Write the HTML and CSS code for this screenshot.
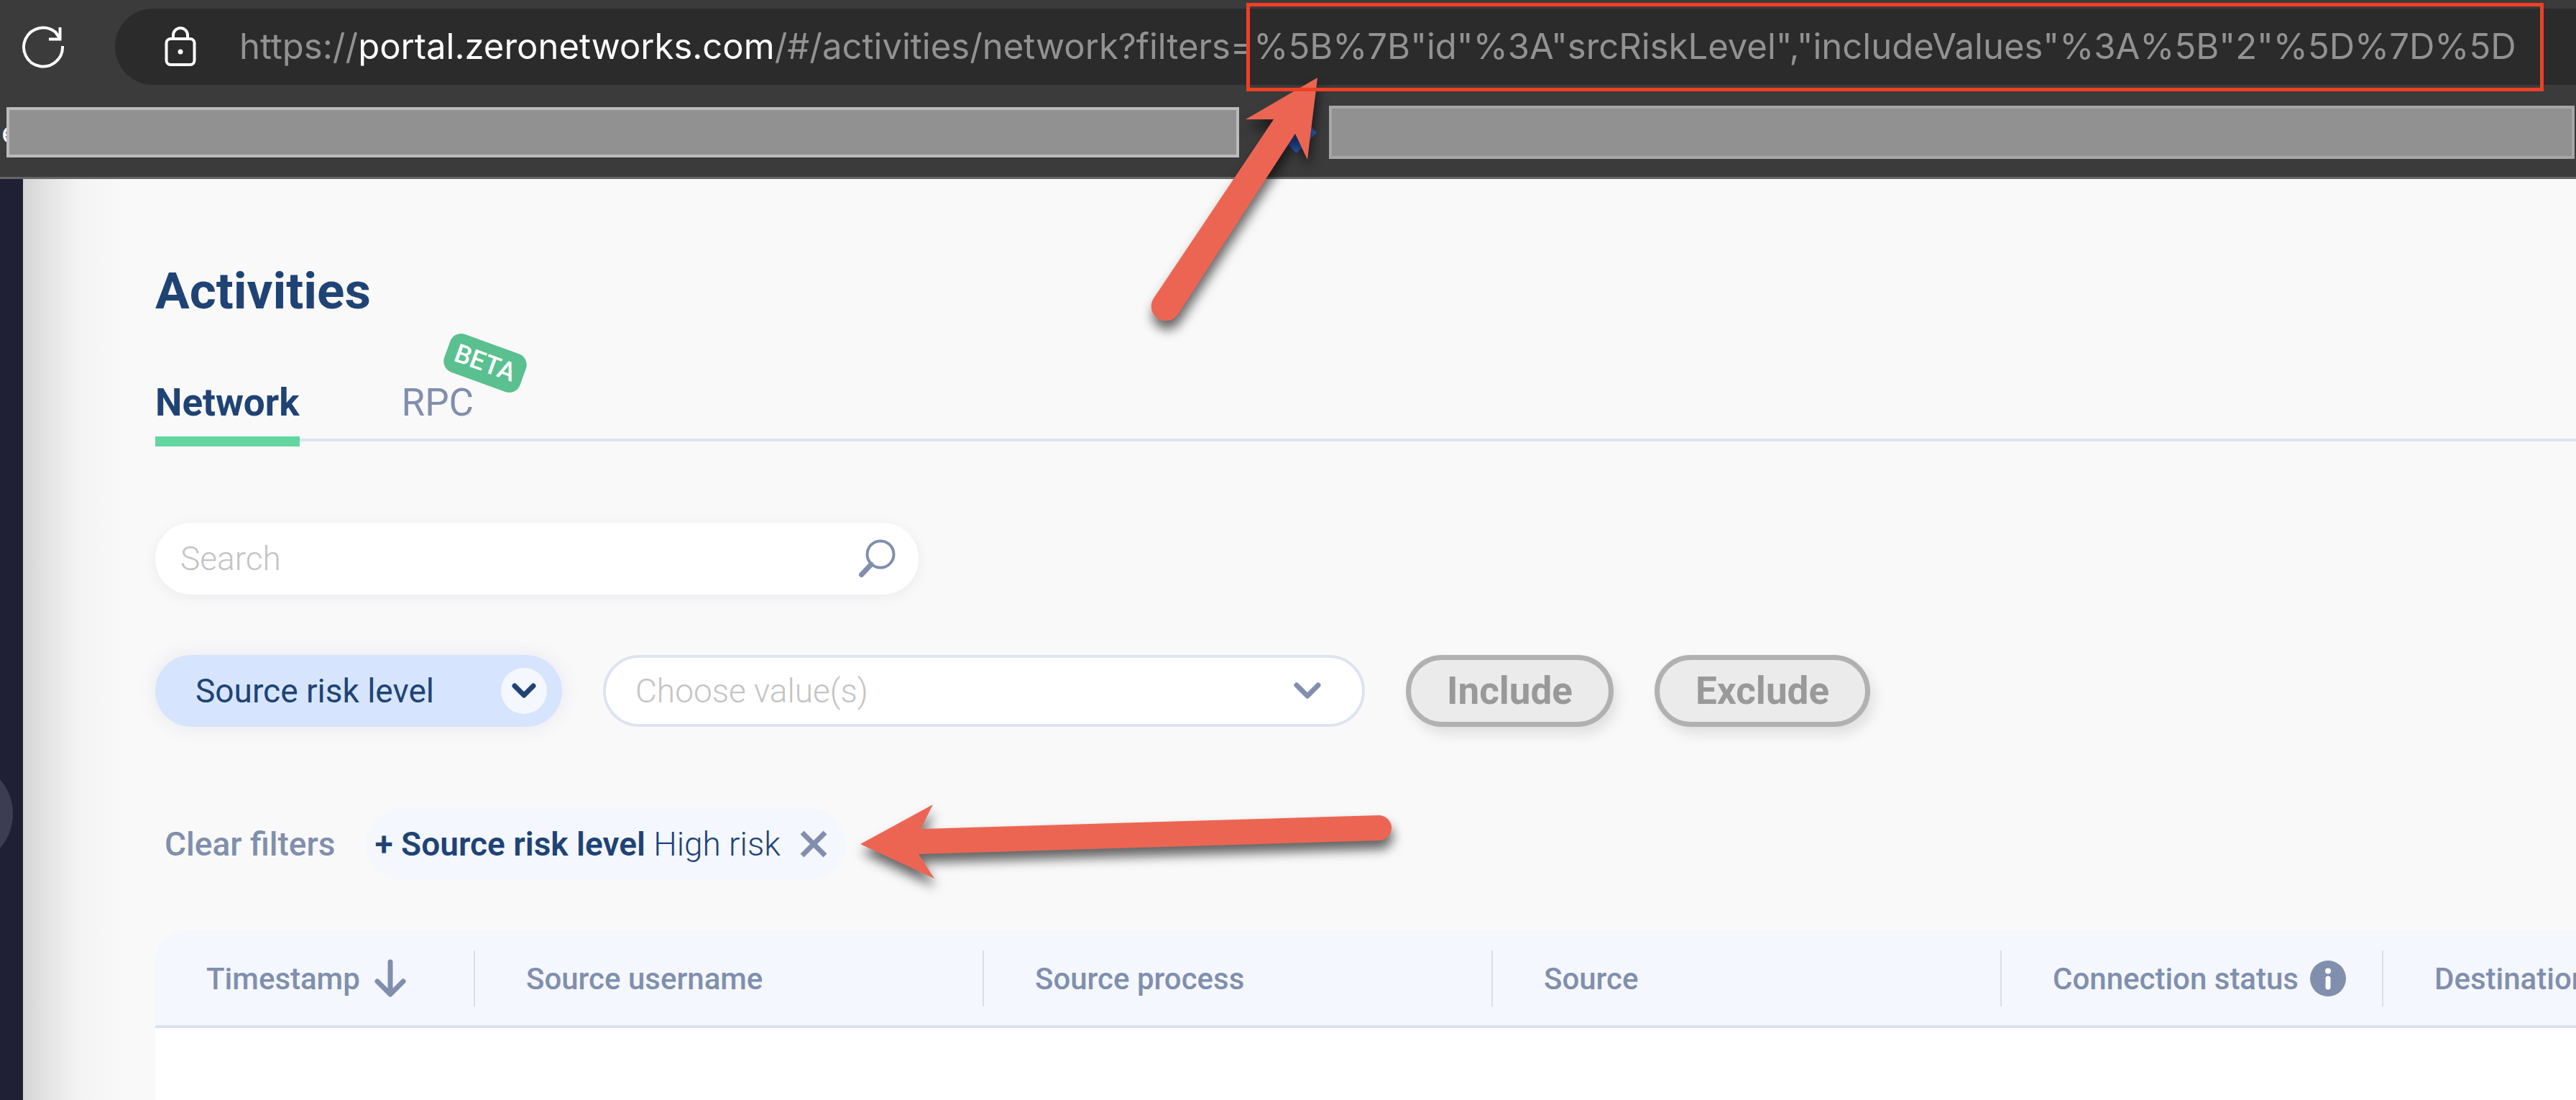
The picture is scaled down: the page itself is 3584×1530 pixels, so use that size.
FILE: index.html
```html
<!DOCTYPE html>
<html lang="en">
<head>
<meta charset="utf-8">
<title>Activities</title>
<link rel="stylesheet" href="styles.css">
</head>
<body>
<header class="browser">
  <div class="toolbar">
    <button class="icon-button reload" aria-label="Reload">
      <svg width="60" height="60" viewBox="0 0 60 60" fill="none" stroke="#fff" stroke-width="4"><path d="M57 29A27 27 0 1 1 47 9.500L53 18M38 19.500H53.500V3"/></svg>
    </button>
    <div class="address">
      <svg width="44" height="56" viewBox="0 0 44 56" fill="none" stroke="#fff" stroke-width="4"><rect x="2.500" y="17" width="39" height="36" rx="6"/><path d="M12 17V12a10 10 0 0 1 20 0V17"/><circle cx="22" cy="35" r="3.500" fill="#fff" stroke="none"/></svg>
      <div class="url">https://<span class="host">portal.zeronetworks.com</span>/#/activities/network?filters=%5B%7B"id"%3A"srcRiskLevel","includeValues"%3A%5B"2"%5D%7D%5D</div>
    </div>
  </div>
  <div class="bookmarks">
    <span class="bookmark-text">e</span>
    <div class="redacted redacted-first"></div>
    <svg class="bookmark-icon" width="57" height="57" viewBox="0 0 57 57"><path d="M28.500 0L57 28.500L28.500 57L0 28.500Z" fill="#2f63c8"/></svg>
    <div class="redacted redacted-second"></div>
  </div>
</header>
<div class="app">
  <nav class="sidebar" aria-label="Main"><button class="expand" aria-label="Expand menu"></button></nav>
  <main class="content">
    <h1 class="title">Activities</h1>
    <div class="tabs" role="tablist">
      <button class="tab tab-active" role="tab" aria-selected="true">Network</button>
      <button class="tab" role="tab" aria-selected="false">RPC<span class="beta">BETA</span></button>
    </div>
    <form class="search" role="search">
      <input class="search-input" type="text" placeholder="Search" aria-label="Search">
      <button class="icon-button" type="button" aria-label="Run search">
        <svg width="54" height="54" viewBox="0 0 54 54" fill="none" stroke="#808fad"><circle cx="32" cy="21" r="18.500" stroke-width="4"/><path d="M19 35L5.500 49.500" stroke-width="7" stroke-linecap="round"/></svg>
      </button>
    </form>
    <div class="filters">
      <div class="field field-filter">
        <select class="select" aria-label="Filter"><option>Source risk level</option></select>
        <span class="chevron chevron-round"><svg width="36" height="24" viewBox="0 0 36 24" fill="none" stroke="#204375" stroke-width="7" stroke-linecap="round" stroke-linejoin="round"><path d="M5 5L18 18L31 5"/></svg></span>
      </div>
      <div class="field field-values">
        <select class="select" aria-label="Values"><option>Choose value(s)</option></select>
        <span class="chevron"><svg width="38" height="26" viewBox="0 0 38 26" fill="none" stroke="#808fad" stroke-width="7" stroke-linecap="round" stroke-linejoin="round"><path d="M4 5L19 20L34 5"/></svg></span>
      </div>
      <button class="action">Include</button>
      <button class="action">Exclude</button>
    </div>
    <div class="applied">
      <button class="clear">Clear filters</button>
      <div class="chip">
        <span><b class="chip-name">+ Source risk level</b> High risk</span>
        <button class="icon-button" aria-label="Remove filter"><svg width="38" height="38" viewBox="0 0 38 38" stroke="#808fad" stroke-width="7"><path d="M3 3L35 35M35 3L3 35"/></svg></button>
      </div>
    </div>
    <div class="table-wrap">
      <table class="table">
        <colgroup><col class="col-time"><col class="col-wide"><col class="col-wide"><col class="col-wide"><col class="col-status"><col></colgroup>
        <thead>
          <tr>
            <th><div class="head">Timestamp <svg width="48" height="54" viewBox="-4 0 48 54" fill="none" stroke="#808fad" stroke-width="7" stroke-linecap="round" stroke-linejoin="round"><path d="M22 4V48M4 31L22 49L40 31"/></svg></div></th>
            <th><div class="head">Source username</div></th>
            <th><div class="head">Source process</div></th>
            <th><div class="head">Source</div></th>
            <th><div class="head">Connection status <svg width="50" height="50" viewBox="0 0 50 50"><circle cx="25" cy="25" r="25" fill="#808fad"/><circle cx="25" cy="14.500" r="4" fill="#fff"/><path d="M25 25V37" stroke="#fff" stroke-width="7" stroke-linecap="round"/></svg></div></th>
            <th><div class="head">Destination</div></th>
          </tr>
        </thead>
      </table>
    </div>
  </main>
</div>
<svg class="note-arrow note-arrow-url" width="260" height="370" viewBox="0 0 260 370"><path d="M233 8L219 122L202 86L39 337A19 19 0 0 1 5 315L172 66H133Z" fill="#ec6553"/></svg>
<svg class="note-arrow note-arrow-chip" width="770" height="130" viewBox="0 0 770 130"><path d="M7 64L108 9L91 43L728 24A17.500 17.500 0 0 1 729 59L88 78L110 112Z" fill="#ec6553"/></svg>
<div class="note-box"></div>
</body>
</html>
```
FILE: styles.css
```css
* { box-sizing: border-box; }

body {
  margin: 0;
  min-height: 100vh;
  display: flex;
  flex-direction: column;
  position: relative;
  overflow: hidden;
  background: #f9f9f9;
  font-family: Roboto, "Liberation Sans", sans-serif;
  font-size: 46px;
  color: #204375;
}

button, input, select {
  font: inherit;
  color: inherit;
  border: 0;
  margin: 0;
  padding: 0;
  background: none;
}

svg { display: block; flex: none; }
.icon-button { flex: none; }

/* Browser chrome */
.browser {
  height: 249px;
  background: #3b3b3b;
  border-bottom: 3px solid #666;
}

.toolbar {
  display: flex;
  align-items: center;
  padding: 12px 0 29px 30px;
}

.address {
  flex: 1;
  display: flex;
  align-items: center;
  gap: 60px;
  height: 106px;
  margin-left: 70px;
  padding-left: 69px;
  border-radius: 53px 0 0 53px;
  background: #2b2b2b;
}

.url {
  font-family: Inter, "Liberation Sans", sans-serif;
  font-size: 49px;
  line-height: 60px;
  white-space: nowrap;
  color: #929292;
}

.host { color: #fff; }

.bookmarks {
  display: flex;
  align-items: center;
  height: 74px;
  padding-right: 2px;
}

.bookmark-text {
  width: 9px;
  padding-left: 2px;
  overflow: hidden;
  font-family: Inter, "Liberation Sans", sans-serif;
  font-size: 42px;
  line-height: 50px;
  color: #fff;
}

.redacted {
  height: 70px;
  border: 4px solid #bbb;
  background: #919191;
}

.redacted-first { flex: 0 1 1715px; }

.redacted-second {
  flex: 1;
  height: 74px;
  border-color: #a6a6a6;
}

.bookmark-icon { margin: 0 17px 0 51px; }

/* Application */
.app {
  flex: 1;
  display: flex;
}

.sidebar {
  flex: none;
  width: 32px;
  overflow: hidden;
  position: relative;
  background: #1f2033;
}

.expand {
  position: absolute;
  top: 810px;
  right: 14px;
  width: 146px;
  height: 146px;
  border-radius: 50%;
  background: #3d3d52;
}

.content {
  flex: 1;
  min-width: 0;
  padding: 114px 0 0 184px;
  display: flex;
  flex-direction: column;
  background: linear-gradient(90deg, #d4d4d4, #e4e4e4 34px, #f4f4f4 80px, #f9f9f9 140px);
}

.title {
  margin: 0 0 80px;
  font-size: 71px;
  line-height: 84px;
  font-weight: 700;
}

.tabs {
  display: flex;
  gap: 142px;
  border-bottom: 4px solid #dde3ef;
}

.tab {
  position: relative;
  margin-bottom: -11px;
  padding-bottom: 14px;
  border-bottom: 14px solid transparent;
  font-size: 53px;
  line-height: 66px;
  color: #808fad;
}

.tab-active {
  border-color: #63d6a0;
  font-weight: 700;
  color: #204375;
}

.beta {
  position: absolute;
  left: 60px;
  top: -50px;
  width: 112px;
  height: 56px;
  border-radius: 16px;
  background: #5ac08f;
  font-size: 36px;
  line-height: 56px;
  font-weight: 500;
  text-align: center;
  color: #fff;
  transform: rotate(20deg);
}

.search {
  display: flex;
  align-items: center;
  width: 1062px;
  height: 100px;
  margin: 113px 0 84px;
  padding: 0 31px 0 35px;
  border-radius: 50px;
  background: #fff;
  box-shadow: 0 4px 20px rgba(40, 40, 80, .06);
}

.search-input {
  flex: 1;
  min-width: 0;
  outline: 0;
  font-weight: 300;
}

.search-input::placeholder { color: #c4c4c4; opacity: 1; }

.filters {
  display: flex;
  align-items: center;
  gap: 57px;
}

.field {
  display: grid;
  align-items: center;
  height: 100px;
  border-radius: 50px;
}

.select {
  grid-area: 1 / 1;
  appearance: none;
  width: 100%;
  height: 100%;
  outline: 0;
}

.chevron {
  grid-area: 1 / 1;
  justify-self: end;
  pointer-events: none;
}

.field-filter {
  width: 566px;
  padding: 0 21px 0 56px;
  background: #d6e5fd;
  box-shadow: 0 0 28px rgba(80, 60, 160, .1);
}

.chevron-round {
  display: grid;
  place-items: center;
  width: 64px;
  height: 64px;
  border-radius: 50%;
  background: #f4f7fe;
}

.field-values {
  width: 1060px;
  padding: 0 57px 0 41px;
  border: 4px solid #dde3ef;
  background: #fff;
  font-weight: 300;
  color: #c4c4c4;
}

.action {
  height: 100px;
  padding: 0 50px;
  border: 7px solid #b1b1b1;
  border-radius: 50px;
  background: #ebebeb;
  box-shadow: 6px 10px 18px rgba(0, 0, 0, .1);
  font-size: 53px;
  font-weight: 700;
  color: #999;
}

.applied {
  display: flex;
  align-items: center;
  gap: 43px;
  margin: 113px 0 70px;
  padding-left: 13px;
}

.clear { font-weight: 500; color: #808fad; }

.chip {
  display: flex;
  align-items: center;
  gap: 27px;
  height: 100px;
  padding: 0 26px 0 12px;
  border-radius: 50px;
  background: #f4f7fe;
  font-weight: 300;
  white-space: nowrap;
}

.chip-name { font-weight: 600; }

.table-wrap {
  flex: 1;
  overflow: hidden;
  border-radius: 40px 0 0 0;
  background: #fff;
}

.table {
  width: 100%;
  table-layout: fixed;
  border-collapse: collapse;
  font-size: 42px;
  color: #808fad;
}

.table thead {
  background: #f4f7fe;
  border-bottom: 4px solid #dbe2ee;
}

.table th {
  padding: 28px 0 26px;
  font-weight: 500;
}

.col-time { width: 445px; }
.col-wide { width: 708px; }
.col-status { width: 531px; }

.head {
  display: flex;
  align-items: center;
  gap: 16px;
  height: 78px;
  padding-left: 71px;
  border-right: 2px solid #d8deea;
  white-space: nowrap;
  overflow: hidden;
}

.table th:last-child .head { border-right: 0; }

/* Annotations */
.note-arrow {
  position: absolute;
  overflow: visible;
  filter: drop-shadow(2px 12px 8px rgba(0, 0, 0, .6));
}

.note-arrow-url { left: 1600px; top: 100px; }
.note-arrow-chip { left: 1190px; top: 1110px; }

.note-box {
  position: absolute;
  left: 1734px;
  right: 45px;
  top: 4px;
  height: 123px;
  border: 5px solid #ee4026;
}
```
